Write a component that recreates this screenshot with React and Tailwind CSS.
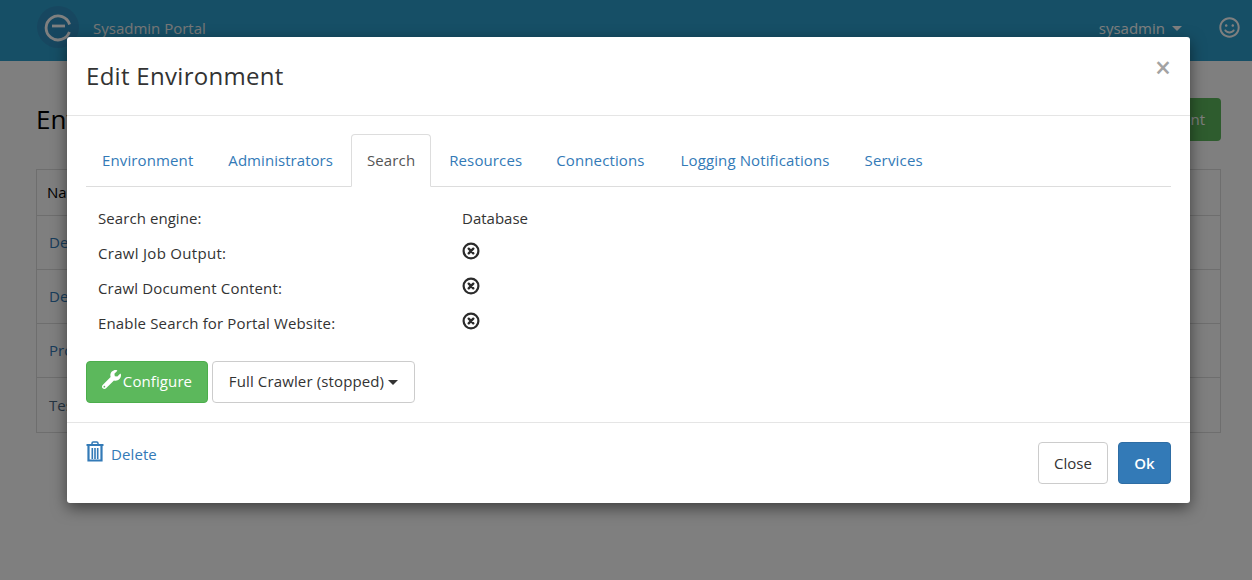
import React from "react";
import { FaWrench, FaRegSmile } from "react-icons/fa";

function XCircle() {
  return (
    <svg width="18" height="18" viewBox="0 0 18 18" fill="none" className="block">
      <circle cx="9" cy="9" r="7.4" stroke="#2b2b2b" strokeWidth="2.2" />
      <path d="M6.7 6.7 L11.3 11.3 M11.3 6.7 L6.7 11.3" stroke="#2b2b2b" strokeWidth="2.4" strokeLinecap="round" />
    </svg>
  );
}

function TrashIcon() {
  return (
    <svg width="18" height="21" viewBox="0 0 18 21" fill="none" className="block">
      <path d="M6 4 V2.2 Q6 1 7.2 1 H10.8 Q12 1 12 2.2 V4" stroke="#337ab7" strokeWidth="1.5" />
      <path d="M0.5 4 H17.5" stroke="#337ab7" strokeWidth="2" />
      <path d="M2.5 5 V19.5 H15.5 V5" stroke="#337ab7" strokeWidth="2.2" />
      <path d="M6.3 7 V18 M9 7 V18 M11.7 7 V18" stroke="#337ab7" strokeWidth="1.6" />
    </svg>
  );
}

function Caret({ color = "border-t-[#333]" }) {
  return <span className={`inline-block w-0 h-0 border-x-[5px] border-x-transparent border-t-[5px] ${color}`} />;
}

function Tab({ children, active, className = "" }) {
  return active ? (
    <div className="mr-[2px] -mb-px h-[53px] px-[15px] pt-[15px] bg-white border border-[#ddd] border-b-white rounded-t-[4px] text-[#555] leading-[21px] tracking-[0.12px]">
      {children}
    </div>
  ) : (
    <div className={`mr-[2px] h-[52px] pt-[16px] text-[#337ab7] leading-[21px] ${className}`}>{children}</div>
  );
}

function Row({ label, children, top = "", labelClass = "" }) {
  return (
    <div className="grid grid-cols-[364px_1fr] h-[35px] px-[12px] items-center">
      <div className={`text-[#333] ${labelClass}`}>{label}</div>
      <div className={top}>{children}</div>
    </div>
  );
}

export default function App() {
  return (
    <div className="relative w-[1252px] h-[580px] overflow-hidden bg-white text-[15px] text-[#333] font-['Open_Sans',sans-serif]">
      <header className="h-[61px] bg-[#2d9fcc] flex items-center pl-[37px] pr-[12px] text-white">
        <div className="w-[42px] h-[42px] rounded-full bg-[#2f8fc0] flex items-center justify-center mt-[-7px]">
          <svg width="30" height="30" viewBox="0 0 30 30" fill="none">
            <path d="M26.4 20 A12 12 0 1 1 26.6 12.5" stroke="#fff" strokeWidth="2.8" fill="none" />
            <path d="M9 14 H22" stroke="#fff" strokeWidth="2.8" />
          </svg>
        </div>
        <span className="ml-[14px] mt-[-4px] text-[#eee]">Sysadmin Portal</span>
        <span className="ml-auto mt-[-4px] flex items-center gap-[7px]">
          sysadmin <Caret color="border-t-white" />
        </span>
        <FaRegSmile className="ml-[37px] mt-[-6px] text-[21px]" />
      </header>

      <main className="pl-[36px] pr-[31px] pt-[37px]">
        <div className="flex items-center justify-between h-[43px]">
          <h1 className="text-[26px] text-black">Environments</h1>
          <button className="h-[43px] px-[16px] bg-[#5cb85c] text-white rounded-[4px]">Add Environment</button>
        </div>
        <div className="mt-[28px] border border-[#ddd]">
          <div className="h-[46px] border-b border-[#ddd] px-[10px] flex items-center text-black">Name</div>
          {["Development", "Demo", "Production", "Test"].map((n, i) => (
            <div key={n} className={`h-[54px] px-[12px] flex items-center ${i < 3 ? "border-b border-[#ddd]" : ""} ${i === 3 ? "text-[#4d6a85]" : "text-[#337ab7]"}`}>
              {n}
            </div>
          ))}
        </div>
      </main>

      <div className="absolute inset-0 bg-black/50 pt-[37px] pl-[67px]">
        <div className="w-[1123px] h-[466px] bg-white rounded-[3px] shadow-[0_5px_15px_rgba(0,0,0,0.5)] relative flex flex-col">
          <div className="h-[79px] shrink-0 border-b border-[#e5e5e5] pl-[19px] pt-[20px] pr-[19px] flex justify-between">
            <h4 className="text-[24px] leading-[38px] tracking-[0.3px] text-[#333]">Edit Environment</h4>
            <span className="text-[#a3a3a3] text-[28px] font-semibold leading-[20px]">×</span>
          </div>

          <div className="h-[306px] shrink-0 px-[19px] pt-[18px]">
            <div className="flex border-b border-[#ddd] h-[53px]">
              <Tab className="px-[16px] tracking-[0.12px]">Environment</Tab>
              <Tab className="pl-[17px] pr-[16px] tracking-[0.05px]">Administrators</Tab>
              <Tab active>Search</Tab>
              <Tab className="px-[16px] tracking-[0.12px]">Resources</Tab>
              <Tab className="px-[16px] tracking-[0.12px]">Connections</Tab>
              <Tab className="ml-[2px] px-[16px] tracking-[0.12px]">Logging Notifications</Tab>
              <Tab className="ml-[1px] px-[16px] tracking-[0.2px]">Services</Tab>
            </div>
            <div className="pt-[14px]">
              <Row label="Search engine:" labelClass="tracking-[0.07px]">Database</Row>
              <Row label="Crawl Job Output:" labelClass="tracking-[0.3px]" top="-mt-[5px]"><XCircle /></Row>
              <Row label="Crawl Document Content:" labelClass="tracking-[0.17px]" top="-mt-[5px]"><XCircle /></Row>
              <Row label="Enable Search for Portal Website:" labelClass="tracking-[0.15px]" top="-mt-[5px]"><XCircle /></Row>
            </div>
            <div className="flex gap-[4px] mt-[20px]">
              <button className="w-[122px] h-[42px] pb-[2px] bg-[#5cb85c] border border-[#4cae4c] rounded-[4px] text-white flex items-center justify-center gap-[2px] tracking-[0.1px]">
                <FaWrench className="text-[19px] -mt-[3px]" />
                Configure
              </button>
              <button className="w-[203px] h-[42px] pb-[2px] bg-white border border-[#ccc] rounded-[4px] text-[#333] flex items-center justify-center gap-[4px] tracking-[0.13px]">
                Full Crawler (stopped) <span className="mt-[2px] flex"><Caret /></span>
              </button>
            </div>
          </div>

          <div className="flex-1 border-t border-[#e5e5e5] px-[19px] pt-[19px] flex justify-between">
            <div className="flex items-start text-[#337ab7] -mt-px">
              <TrashIcon />
              <span className="ml-[7px] mt-[3px] leading-[21px] tracking-[0.1px]">Delete</span>
            </div>
            <div className="flex gap-[10px]">
              <button className="w-[70px] h-[42px] bg-white border border-[#ccc] rounded-[4px] text-[#333]">Close</button>
              <button className="w-[53px] h-[42px] bg-[#337ab7] border border-[#2e6da4] rounded-[4px] text-white font-semibold">Ok</button>
            </div>
          </div>
        </div>
      </div>
    </div>
  );
}
